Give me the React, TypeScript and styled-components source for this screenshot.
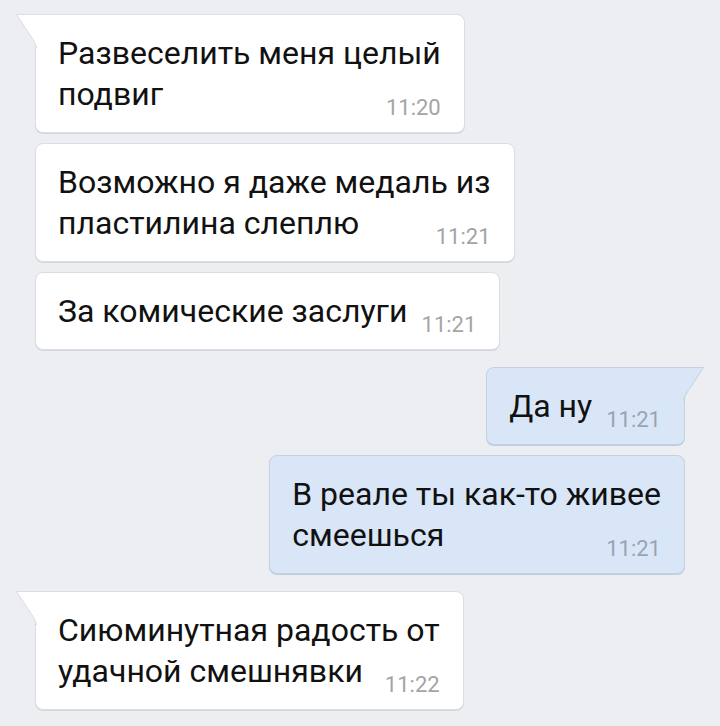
import styled, { createGlobalStyle } from 'styled-components';

type Message = {
  id: number;
  out: boolean;
  lines: string[];
  time: string;
  first: boolean;
};

const messages: Message[] = [
  { id: 1, out: false, first: true, lines: ['Развеселить меня целый', 'подвиг'], time: '11:20' },
  { id: 2, out: false, first: false, lines: ['Возможно я даже медаль из', 'пластилина слеплю'], time: '11:21' },
  { id: 3, out: false, first: false, lines: ['За комические заслуги'], time: '11:21' },
  { id: 4, out: true, first: true, lines: ['Да ну'], time: '11:21' },
  { id: 5, out: true, first: false, lines: ['В реале ты как-то живее', 'смеешься'], time: '11:21' },
  { id: 6, out: false, first: true, lines: ['Сиюминутная радость от', 'удачной смешнявки'], time: '11:22' },
];

const GlobalStyle = createGlobalStyle`
  body {
    margin: 0;
    background: #eceef1;
    font-family: Roboto, "Noto Sans", sans-serif;
  }
`;

const Page = styled.div`
  display: flex;
  flex-direction: column;
  padding: 14px 35px;
  min-height: 726px;
  box-sizing: border-box;
`;

const Bubble = styled.div<{ $out: boolean; $first: boolean; $gap: number }>`
  position: relative;
  align-self: ${(p) => (p.$out ? 'flex-end' : 'flex-start')};
  margin-top: ${(p) => p.$gap}px;
  padding: 18px 23px 13px 22px;
  background: ${(p) => (p.$out ? '#d8e6f7' : '#ffffff')};
  border: 1px solid ${(p) => (p.$out ? '#c3d1e1' : '#d9dee4')};
  border-radius: 8px;
  ${(p) => p.$first && (p.$out ? 'border-top-right-radius: 0;' : 'border-top-left-radius: 0;')}
  box-shadow: 0 1px 0 ${(p) => (p.$out ? '#bfcde0' : '#d3d8df')};
  color: #111;
`;

const Line = styled.div`
  font-size: 32px;
  line-height: 41px;
  white-space: nowrap;
`;

const LastRow = styled.div`
  display: flex;
  align-items: flex-end;
`;

const LastText = styled(Line)`
  margin-bottom: 4px;
  margin-right: 14px;
`;

const Time = styled.span<{ $out: boolean }>`
  margin-left: auto;
  font-size: 22px;
  line-height: 22px;
  color: ${(p) => (p.$out ? '#98a4b2' : '#a4a4a4')};
  white-space: nowrap;
`;

const TailSvg = styled.svg<{ $out: boolean }>`
  position: absolute;
  top: -1px;
  ${(p) => (p.$out ? 'right: -20px; transform: scaleX(-1);' : 'left: -20px;')}
  width: 21px;
  height: 34px;
  overflow: visible;
`;

const Tail = ({ out }: { out: boolean }) => (
  <TailSvg $out={out} viewBox="0 0 21 34">
    <path
      d="M21 0.5 L0.5 0.5 L12 18 Q20 29 20.5 34 L21 34 Z"
      fill={out ? '#d8e6f7' : '#ffffff'}
    />
    <path
      d="M21 0.5 L0.5 0.5 L12 18 Q20 29 20.5 34"
      fill="none"
      stroke={out ? '#c3d1e1' : '#d9dee4'}
      strokeWidth="1"
    />
  </TailSvg>
);

export default function App() {
  return (
    <Page>
      <GlobalStyle />
      {messages.map((m, i) => {
        const head = m.lines.slice(0, -1);
        const last = m.lines[m.lines.length - 1];
        const gap = i === 0 ? 0 : m.first ? 17 : 10;
        return (
          <Bubble key={m.id} $out={m.out} $first={m.first} $gap={gap}>
            {m.first && <Tail out={m.out} />}
            {head.map((l) => (
              <Line key={l}>{l}</Line>
            ))}
            <LastRow>
              <LastText>{last}</LastText>
              <Time $out={m.out}>{m.time}</Time>
            </LastRow>
          </Bubble>
        );
      })}
    </Page>
  );
}
